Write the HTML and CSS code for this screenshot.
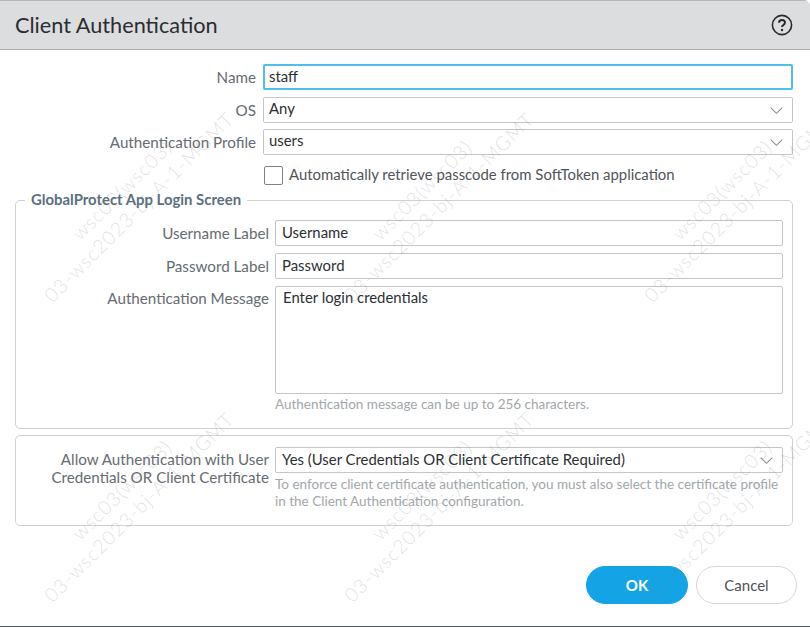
FILE: index.html
```html
<!DOCTYPE html>
<html>
<head>
    <title>Client Authentication</title>
    <link rel="stylesheet" href="styles.css">
</head>
<body>
    <div class="dialog">
        <div class="dialog-header">
            <span class="dialog-title">Client Authentication</span>
            <svg class="help-icon" width="22" height="22" viewBox="0 0 22 22">
                <circle cx="11" cy="11" r="9.6" fill="none" stroke="#26292c" stroke-width="1.6"/>
                <path d="M8 8.8c0-1.8 1.3-2.8 3-2.8s3 1 3 2.6c0 1.3-.8 1.9-1.7 2.5-.8.5-1.3 1-1.3 2" fill="none" stroke="#26292c" stroke-width="1.9"/>
                <circle cx="11" cy="16" r="1.2" fill="#26292c"/>
            </svg>
        </div>

        <div class="dialog-body">
            <div class="top-rows">
                <div class="row">
                    <label class="field-label">Name</label>
                    <div class="input input-focus">staff</div>
                </div>
                <div class="row">
                    <label class="field-label">OS</label>
                    <div class="input select">Any
                        <svg class="chevron" width="13" height="7" viewBox="0 0 13 7"><path d="M.7.7l5.8 5.6L12.3.7" fill="none" stroke="#8b9094" stroke-width="1.1"/></svg>
                    </div>
                </div>
                <div class="row">
                    <label class="field-label">Authentication Profile</label>
                    <div class="input select">users
                        <svg class="chevron" width="13" height="7" viewBox="0 0 13 7"><path d="M.7.7l5.8 5.6L12.3.7" fill="none" stroke="#8b9094" stroke-width="1.1"/></svg>
                    </div>
                </div>
                <div class="row check-row">
                    <span class="checkbox"></span>
                    <span class="check-text">Automatically retrieve passcode from SoftToken application</span>
                </div>
            </div>

            <fieldset class="group login-group">
                <legend>GlobalProtect App Login Screen</legend>
                <div class="row">
                    <label class="field-label">Username Label</label>
                    <div class="input">Username</div>
                </div>
                <div class="row">
                    <label class="field-label">Password Label</label>
                    <div class="input">Password</div>
                </div>
                <div class="row message-row">
                    <label class="field-label">Authentication Message</label>
                    <div class="field-stack">
                        <div class="input textarea">Enter login credentials</div>
                        <div class="hint">Authentication message can be up to 256 characters.</div>
                    </div>
                </div>
            </fieldset>

            <div class="group cert-group">
                <div class="row message-row">
                    <label class="field-label">Allow Authentication with User Credentials OR Client Certificate</label>
                    <div class="field-stack">
                        <div class="input select">Yes (User Credentials OR Client Certificate Required)
                            <svg class="chevron" width="13" height="7" viewBox="0 0 13 7"><path d="M.7.7l5.8 5.6L12.3.7" fill="none" stroke="#8b9094" stroke-width="1.1"/></svg>
                        </div>
                        <div class="hint hint-long">To enforce client certificate authentication, you must also select the certificate profile in the Client Authentication configuration.</div>
                    </div>
                </div>
            </div>
        </div>

        <div class="dialog-footer">
            <button class="btn btn-primary">OK</button>
            <button class="btn btn-cancel">Cancel</button>
        </div>

        <!-- watermark sits over the whole dialog -->
        <div class="watermarks">
            <div class="mark"><span>wsc03(wsc03)</span><span>03-wsc2023-bj-A-1-MGMT</span></div>
            <div class="mark"><span>wsc03(wsc03)</span><span>03-wsc2023-bj-A-1-MGMT</span></div>
            <div class="mark"><span>wsc03(wsc03)</span><span>03-wsc2023-bj-A-1-MGMT</span></div>
            <div class="mark"><span>wsc03(wsc03)</span><span>03-wsc2023-bj-A-1-MGMT</span></div>
            <div class="mark"><span>wsc03(wsc03)</span><span>03-wsc2023-bj-A-1-MGMT</span></div>
            <div class="mark"><span>wsc03(wsc03)</span><span>03-wsc2023-bj-A-1-MGMT</span></div>
        </div>
    </div>
</body>
</html>
```

FILE: styles.css
```css
html, body { margin: 0; padding: 0; }
body {
    width: 810px;
    height: 627px;
    overflow: hidden;
    font-family: Lato, "Open Sans", sans-serif;
    font-size: 14.9px;
    color: #2b2f33;
    background: #fff;
}
.dialog {
    position: relative;
    width: 810px;
    height: 627px;
    box-sizing: border-box;
    display: flex;
    flex-direction: column;
    overflow: hidden;
    border-bottom: 1px solid #55585b;
    border-top-right-radius: 6px;
    background: #fff;
}
.dialog-header {
    height: 50px;
    box-sizing: border-box;
    flex: none;
    display: flex;
    align-items: center;
    justify-content: space-between;
    padding: 0 17px 1px 15px;
    background: #dcdddf;
    border-top: 1px solid #b5b7ba;
    border-bottom: 1px solid #a9adb0;
}
.dialog-title { font-size: 21.7px; color: #2a2d30; }
.help-icon { display: block; }

.dialog-body { flex: 1; padding: 14px 17px 0 15px; }
.top-rows { display: flex; flex-direction: column; gap: 6.6px; }
.top-rows .input { padding-left: 5px; }
.top-rows .select { line-height: 20px; }
.row { display: flex; gap: 7px; }
.field-label {
    width: 241px;
    flex: none;
    text-align: right;
    font-size: 15.2px;
    color: #666c71;
    line-height: 18px;
    padding-top: 4px;
}
.input {
    flex: 1;
    height: 26px;
    box-sizing: border-box;
    position: relative;
    padding: 0 6px;
    line-height: 22px;
    border: 1px solid #c3c6c8;
    border-radius: 2px;
    background: transparent;
}
.top-rows .input-focus { border: 2px solid #4fbdf0; line-height: 20px; padding-left: 4px; }
.chevron { position: absolute; right: 9px; top: 9px; }

.check-row { align-items: center; padding-left: 249px; gap: 6px; margin-top: 3.5px; }
.checkbox {
    width: 17px;
    height: 17px;
    border: 1px solid #7d8388;
    border-radius: 2px;
}
.check-text { color: #4f5459; padding-bottom: 2px; }

.group {
    margin: 0;
    border: 1px solid #cfd1d3;
    border-radius: 5px;
    padding: 0 9px 0 0;
}
.login-group {
    margin-top: 14px;
    height: 230px;
    box-sizing: border-box;
    display: flex;
    flex-direction: column;
    gap: 6.6px;
    padding-top: 19px;
}
.login-group legend {
    margin-left: 9px;
    padding: 0 6px 2px;
    font-weight: bold;
    color: #5b6f80;
    line-height: 0;
}
.login-group .row, .cert-group .row { gap: 6px; }
.login-group .field-label, .cert-group .field-label { width: 253px; }
.field-stack { flex: 1; min-width: 0; }
.textarea { height: 108px; margin-top: .6px; padding: 2px 7px; line-height: 17px; }
.hint { font-size: 13.5px; color: #a2a7ab; line-height: 17px; margin-top: 2px; }
.hint-long { margin-top: 3px; }

.cert-group { margin-top: 6px; height: 91px; box-sizing: border-box; padding-top: 11px; }
.cert-group .field-label { padding-top: 3px; }

.dialog-footer {
    display: flex;
    justify-content: flex-end;
    gap: 8px;
    padding: 0 13px 22px 0;
}
.btn {
    height: 38px;
    border: 1px solid #d4d6d8;
    border-radius: 19px;
    background: transparent;
    font-family: Lato, "Open Sans", sans-serif;
    font-size: 15px;
    color: #4f5459;
}
.btn-primary { width: 102px; background: #14a4e6; border-color: #14a4e6; color: #fff; font-weight: bold; }
.btn-cancel { width: 101px; }

.watermarks {
    position: absolute;
    left: 0;
    top: 0;
    display: grid;
    grid-template-columns: repeat(3, 300px);
    grid-auto-rows: 300px;
    pointer-events: none;
}
.mark { position: relative; }
.mark span {
    position: absolute;
    white-space: nowrap;
    font-size: 19.5px;
    font-weight: 300;
    line-height: 19px;
    letter-spacing: 1px;
    color: rgba(120, 125, 130, .24);
    transform: rotate(-45deg);
    transform-origin: left bottom;
}
.mark span:first-child { left: 82px; top: 224px; }
.mark span:last-child { left: 54px; top: 286px; }
```
